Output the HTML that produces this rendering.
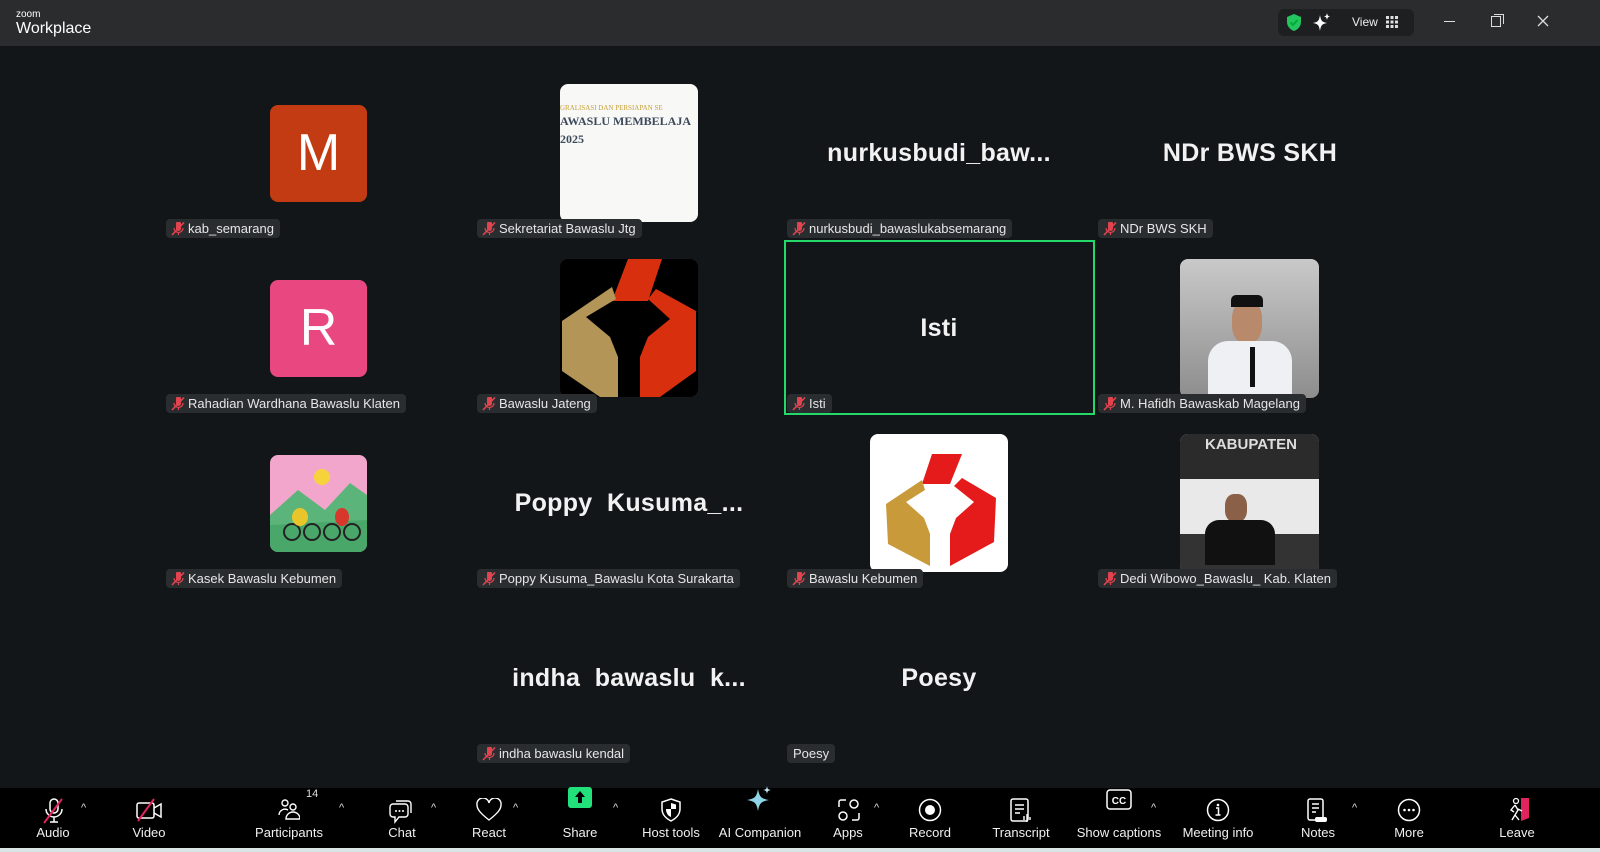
<!DOCTYPE html>
<html><head><meta charset="utf-8"><style>
*{margin:0;padding:0;box-sizing:border-box}
body{width:1600px;height:852px;background:#131619;font-family:"Liberation Sans",sans-serif;position:relative;overflow:hidden;color:#fff}
.top{position:absolute;left:0;top:0;width:1600px;height:46px;background:#2b2c2e}
.abs{position:absolute}
.lbl{position:absolute;height:19px;background:#2a2d30;border-radius:4px;font-size:13px;color:#e6e6e6;line-height:19px;padding:0 6px 0 22px;white-space:nowrap}
.lbl svg{position:absolute;left:5px;top:3px}
.big{position:absolute;font-weight:bold;font-size:25px;color:#f2f2f2;text-align:center;width:310px;white-space:nowrap;letter-spacing:0.3px}
.av{position:absolute;border-radius:8px;overflow:hidden}
.tb{position:absolute;left:0;top:788px;width:1600px;height:60px;background:#000}
.bl{position:absolute;left:0;top:848px;width:1600px;height:4px;background:#d9e4e4}
.btn{position:absolute;top:825px;font-size:13px;color:#f0f0f0;text-align:center;transform:translateX(-50%);white-space:nowrap}
.ic{position:absolute;top:798px}
.car{position:absolute;top:802px;font-size:11px;color:#ddd}
</style></head><body>
<div class="top">
<div class="abs" style="left:16px;top:9px;font-size:10px;color:#fff">zoom</div>
<div class="abs" style="left:16px;top:20px;font-size:16px;color:#fff">Workplace</div>
<div class="abs" style="left:1278px;top:9px;width:136px;height:27px;background:#1e1f21;border-radius:6px"></div>
<svg class="abs" style="left:1286px;top:13px" width="16" height="19" viewBox="0 0 16 19"><path d="M8 1 L15 4 V9 C15 14 11 17 8 18 C5 17 1 14 1 9 V4Z" fill="#22c55e"/><path d="M4.5 9.5 L7 12 L11.5 7" stroke="#0a3" stroke-width="1.8" fill="none"/></svg>
<svg class="abs" style="left:1312px;top:12px" width="20" height="20" viewBox="0 0 20 20"><path d="M8 3 C9 9 10 10 15 11 C10 12 9 13 8 19 C7 13 6 12 1 11 C6 10 7 9 8 3Z" fill="#fff"/><path d="M15 1 C15.5 3.5 16 4 18 4.5 C16 5 15.5 5.5 15 8 C14.5 5.5 14 5 12 4.5 C14 4 14.5 3.5 15 1Z" fill="#fff"/></svg>
<div class="abs" style="left:1352px;top:15px;font-size:12px;color:#eee">View</div>
<svg class="abs" style="left:1386px;top:16px" width="12" height="12"><g fill="#ddd"><rect x="0" y="0" width="3" height="3"/><rect x="4.5" y="0" width="3" height="3"/><rect x="9" y="0" width="3" height="3"/><rect x="0" y="4.5" width="3" height="3"/><rect x="4.5" y="4.5" width="3" height="3"/><rect x="9" y="4.5" width="3" height="3"/><rect x="0" y="9" width="3" height="3"/><rect x="4.5" y="9" width="3" height="3"/><rect x="9" y="9" width="3" height="3"/></g></svg>
<div class="abs" style="left:1444px;top:21px;width:11px;height:1px;background:#ddd"></div>
<div class="abs" style="left:1491px;top:16px;width:10px;height:11px;border:1px solid #ddd"></div>
<div class="abs" style="left:1494px;top:14px;width:10px;height:10px;border-top:1px solid #ddd;border-right:1px solid #ddd"></div>
<svg class="abs" style="left:1537px;top:15px" width="12" height="12"><path d="M1 1 L11 11 M11 1 L1 11" stroke="#ddd" stroke-width="1.3"/></svg>
</div>

<div class="av" style="left:270px;top:105px;width:97px;height:97px;background:#c33b12;font-size:52px;text-align:center;line-height:97px;color:#fff">M</div>
<div class="av" style="left:560px;top:84px;width:138px;height:138px;background:#f8f8f6">
<div class="abs" style="left:0;top:20px;font-size:7px;color:#c9a23a;white-space:nowrap;font-family:'Liberation Serif',serif">GRALISASI DAN PERSIAPAN SE</div>
<div class="abs" style="left:0;top:30px;font-size:12px;font-weight:bold;color:#3d4a5c;white-space:nowrap;font-family:'Liberation Serif',serif">AWASLU MEMBELAJA</div>
<div class="abs" style="left:0;top:48px;font-size:12px;font-weight:bold;color:#3d4a5c;font-family:'Liberation Serif',serif">2025</div>
</div>
<div class="big" style="left:784px;top:139px">nurkusbudi_baw...</div>
<div class="big" style="left:1095px;top:139px">NDr BWS SKH</div>

<div class="av" style="left:270px;top:280px;width:97px;height:97px;background:#e9477f;font-size:52px;text-align:center;line-height:97px;color:#fff">R</div>
<div class="av" style="left:560px;top:259px;width:138px;height:138px;background:#000">
<svg width="138" height="138" viewBox="0 0 138 138"><polygon points="68,0 102,0 88,42 52,42" fill="#d8300f"/><polygon points="2,62 52,28 56,40 26,58 50,78 58,98 58,138 40,138 2,112" fill="#b39557"/><polygon points="88,40 96,30 136,52 136,112 100,138 80,138 80,98 88,78 110,60" fill="#d8300f"/></svg>
</div>
<div class="abs" style="left:784px;top:240px;width:311px;height:175px;border:2px solid #23d96a"></div>
<div class="big" style="left:784px;top:314px">Isti</div>
<div class="av" style="left:1180px;top:259px;width:139px;height:139px;background:linear-gradient(#c9c9c9,#8d8d8d)">
<div class="abs" style="left:52px;top:42px;width:30px;height:42px;background:#b88a6b;border-radius:40%"></div>
<div class="abs" style="left:51px;top:36px;width:32px;height:12px;background:#111;border-radius:5px 5px 0 0"></div>
<div class="abs" style="left:28px;top:82px;width:84px;height:60px;background:#eef0f4;border-radius:20px 20px 0 0"></div>
<div class="abs" style="left:70px;top:88px;width:5px;height:40px;background:#111"></div>
</div>

<div class="av" style="left:270px;top:455px;width:97px;height:97px;background:#f3a6cc">
<svg width="97" height="97" viewBox="0 0 97 97"><circle cx="52" cy="22" r="8" fill="#f7d33b"/><polygon points="0,60 28,35 55,55 80,28 97,40 97,97 0,97" fill="#5bb57a"/><polygon points="0,70 97,65 97,97 0,97" fill="#4aa76a"/><circle cx="22" cy="77" r="8" fill="none" stroke="#222" stroke-width="2"/><circle cx="42" cy="77" r="8" fill="none" stroke="#222" stroke-width="2"/><circle cx="62" cy="77" r="8" fill="none" stroke="#222" stroke-width="2"/><circle cx="82" cy="77" r="8" fill="none" stroke="#222" stroke-width="2"/><ellipse cx="30" cy="62" rx="8" ry="9" fill="#e8c52a"/><ellipse cx="72" cy="62" rx="7" ry="9" fill="#d8372b"/></svg>
</div>
<div class="big" style="left:474px;top:489px">Poppy&nbsp; Kusuma_...</div>
<div class="av" style="left:870px;top:434px;width:138px;height:138px;background:#fff">
<svg width="138" height="138" viewBox="0 0 138 138"><polygon points="62,20 92,20 80,50 52,50" fill="#e51b1b"/><polygon points="16,70 52,46 55,56 36,68 54,84 60,100 60,132 18,110" fill="#c99a3a"/><polygon points="84,52 92,44 126,64 124,108 80,132 80,100 86,84 104,68" fill="#e51b1b"/></svg>
</div>
<div class="av" style="left:1180px;top:434px;width:139px;height:139px;background:#e9e9e9">
<div class="abs" style="left:0;top:0;width:139px;height:45px;background:#2b2b2b"></div>
<div class="abs" style="left:25px;top:2px;font-size:15px;font-weight:bold;color:#ddd;white-space:nowrap">KABUPATEN</div>
<div class="abs" style="left:0;top:100px;width:139px;height:39px;background:#333"></div>
<div class="abs" style="left:45px;top:60px;width:22px;height:28px;background:#8a6048;border-radius:40%"></div>
<div class="abs" style="left:25px;top:86px;width:70px;height:45px;background:#111;border-radius:14px 14px 0 0"></div>
</div>

<div class="big" style="left:474px;top:664px">indha&nbsp; bawaslu&nbsp; k...</div>
<div class="big" style="left:784px;top:664px">Poesy</div>

<svg width="0" height="0" style="position:absolute"><defs><g id="mu"><path d="M5 1.5 a2.5 2.5 0 0 1 5 0 v5 a2.5 2.5 0 0 1 -5 0z" fill="#e2444f"/><path d="M3 6 a4.5 4.5 0 0 0 9 0 M7.5 10.5 v2.5" stroke="#e2444f" stroke-width="1.2" fill="none"/><path d="M1 13 L13 0.5" stroke="#e2444f" stroke-width="1.6"/></g></defs></svg>
<div class="lbl" style="left:166px;top:219px"><svg width="14" height="14"><use href="#mu"/></svg>kab_semarang</div>
<div class="lbl" style="left:477px;top:219px"><svg width="14" height="14"><use href="#mu"/></svg>Sekretariat Bawaslu Jtg</div>
<div class="lbl" style="left:787px;top:219px"><svg width="14" height="14"><use href="#mu"/></svg>nurkusbudi_bawaslukabsemarang</div>
<div class="lbl" style="left:1098px;top:219px"><svg width="14" height="14"><use href="#mu"/></svg>NDr BWS SKH</div>
<div class="lbl" style="left:166px;top:394px"><svg width="14" height="14"><use href="#mu"/></svg>Rahadian Wardhana Bawaslu Klaten</div>
<div class="lbl" style="left:477px;top:394px"><svg width="14" height="14"><use href="#mu"/></svg>Bawaslu Jateng</div>
<div class="lbl" style="left:787px;top:394px"><svg width="14" height="14"><use href="#mu"/></svg>Isti</div>
<div class="lbl" style="left:1098px;top:394px"><svg width="14" height="14"><use href="#mu"/></svg>M. Hafidh Bawaskab Magelang</div>
<div class="lbl" style="left:166px;top:569px"><svg width="14" height="14"><use href="#mu"/></svg>Kasek Bawaslu Kebumen</div>
<div class="lbl" style="left:477px;top:569px"><svg width="14" height="14"><use href="#mu"/></svg>Poppy Kusuma_Bawaslu Kota Surakarta</div>
<div class="lbl" style="left:787px;top:569px"><svg width="14" height="14"><use href="#mu"/></svg>Bawaslu Kebumen</div>
<div class="lbl" style="left:1098px;top:569px"><svg width="14" height="14"><use href="#mu"/></svg>Dedi Wibowo_Bawaslu_ Kab. Klaten</div>
<div class="lbl" style="left:477px;top:744px"><svg width="14" height="14"><use href="#mu"/></svg>indha bawaslu kendal</div>
<div class="lbl" style="left:787px;top:744px;padding-left:6px">Poesy</div>

<div class="tb"></div>
<div class="bl"></div>
<svg class="ic" style="left:42px" width="24" height="26" viewBox="0 0 24 26"><rect x="8" y="1" width="8" height="14" rx="4" fill="none" stroke="#fff" stroke-width="1.5"/><path d="M4 11 a8 8 0 0 0 16 0 M12 19 v5 M8 24 h8" stroke="#fff" stroke-width="1.5" fill="none"/><path d="M2 25 L20 1" stroke="#e0245e" stroke-width="2"/></svg>
<div class="car" style="left:81px">^</div>
<div class="btn" style="left:53px">Audio</div>
<svg class="ic" style="left:135px" width="28" height="24" viewBox="0 0 28 24"><rect x="2" y="5" width="17" height="15" rx="2" fill="none" stroke="#fff" stroke-width="1.5"/><path d="M19 10 L26 6 V19 L19 15" fill="none" stroke="#fff" stroke-width="1.5"/><path d="M3 23 L19 1" stroke="#e0245e" stroke-width="2"/></svg>
<div class="btn" style="left:149px">Video</div>
<svg class="ic" style="left:278px" width="22" height="22" viewBox="0 0 22 22"><circle cx="7" cy="5" r="3" fill="none" stroke="#fff" stroke-width="1.4"/><circle cx="15" cy="9" r="3" fill="none" stroke="#fff" stroke-width="1.4"/><path d="M1 17 a6 6 0 0 1 9 -5 M8 21 a7 7 0 0 1 14 0z" fill="none" stroke="#fff" stroke-width="1.4"/></svg>
<div class="abs" style="left:306px;top:788px;font-size:11px;color:#ddd">14</div>
<div class="car" style="left:339px">^</div>
<div class="btn" style="left:289px">Participants</div>
<svg class="ic" style="left:389px" width="24" height="26" viewBox="0 0 24 26"><path d="M7 3 h12 a3 3 0 0 1 3 3 v9" fill="none" stroke="#fff" stroke-width="1.4"/><path d="M4 6 h12 a3 3 0 0 1 3 3 v7 a3 3 0 0 1 -3 3 h-6 l-4 5 v-5 h-2 a3 3 0 0 1 -3 -3 v-7 a3 3 0 0 1 3 -3z" fill="none" stroke="#fff" stroke-width="1.4"/><circle cx="7" cy="13" r="1" fill="#fff"/><circle cx="10.5" cy="13" r="1" fill="#fff"/><circle cx="14" cy="13" r="1" fill="#fff"/></svg>
<div class="car" style="left:431px">^</div>
<div class="btn" style="left:402px">Chat</div>
<svg class="ic" style="left:476px" width="26" height="24" viewBox="0 0 26 24"><path d="M13 22 C4 15 1 11 1 7 A5.5 5.5 0 0 1 13 5 A5.5 5.5 0 0 1 25 7 C25 11 22 15 13 22Z" fill="none" stroke="#fff" stroke-width="1.4"/></svg>
<div class="car" style="left:513px">^</div>
<div class="btn" style="left:489px">React</div>
<div class="abs" style="left:568px;top:787px;width:24px;height:21px;background:#22e07a;border-radius:3px"></div>
<svg class="abs" style="left:573px;top:789px" width="14" height="16"><path d="M7 2 L2 8 H5 V14 H9 V8 H12Z" fill="#000"/></svg>
<div class="car" style="left:613px">^</div>
<div class="btn" style="left:580px">Share</div>
<svg class="ic" style="left:661px" width="20" height="24" viewBox="0 0 20 24"><path d="M10 1 L19 4 V11 C19 17 14 21 10 23 C6 21 1 17 1 11 V4Z" fill="none" stroke="#fff" stroke-width="1.5"/><path d="M10 5 V19 C7 18 5 15 5 11 H10 V5 L15 6.5 V11 H10" fill="#fff"/></svg>
<div class="btn" style="left:671px">Host tools</div>
<svg class="ic" style="left:747px;top:786px" width="26" height="26" viewBox="0 0 26 26"><path d="M11 3 C12.5 11 14 12.5 22 14 C14 15.5 12.5 17 11 25 C9.5 17 8 15.5 0 14 C8 12.5 9.5 11 11 3Z" fill="#8fd4e8"/><path d="M20 0 C20.5 3 21 3.5 24 4 C21 4.5 20.5 5 20 8 C19.5 5 19 4.5 16 4 C19 3.5 19.5 3 20 0Z" fill="#bfe6f2"/></svg>
<div class="btn" style="left:760px">AI Companion</div>
<svg class="ic" style="left:837px" width="24" height="24" viewBox="0 0 24 24"><path d="M2 9 V4 a2 2 0 0 1 2 -2 h5 M22 15 v5 a2 2 0 0 1 -2 2 h-5" fill="none" stroke="#fff" stroke-width="1.5"/><circle cx="17" cy="6" r="4" fill="none" stroke="#fff" stroke-width="1.5"/><circle cx="6" cy="18" r="4" fill="none" stroke="#fff" stroke-width="1.5"/></svg>
<div class="car" style="left:874px">^</div>
<div class="btn" style="left:848px">Apps</div>
<svg class="ic" style="left:918px" width="24" height="24"><circle cx="12" cy="12" r="10.5" fill="none" stroke="#fff" stroke-width="1.5"/><circle cx="12" cy="12" r="5" fill="#fff"/></svg>
<div class="btn" style="left:930px">Record</div>
<svg class="ic" style="left:1010px" width="22" height="26" viewBox="0 0 22 26"><rect x="1" y="1" width="17" height="22" rx="2" fill="none" stroke="#fff" stroke-width="1.5"/><path d="M5 7 h9 M5 11 h9 M5 15 h5 M14 18 v4 M17 16 v8 M20 19 v3" stroke="#fff" stroke-width="1.4"/></svg>
<div class="btn" style="left:1021px">Transcript</div>
<svg class="ic" style="left:1106px;top:789px" width="26" height="22"><rect x="1" y="1" width="24" height="19" rx="3" fill="none" stroke="#fff" stroke-width="1.5"/><text x="13" y="15" font-family="Liberation Sans" font-size="10" font-weight="bold" fill="#fff" text-anchor="middle">CC</text></svg>
<div class="car" style="left:1151px">^</div>
<div class="btn" style="left:1119px">Show captions</div>
<svg class="ic" style="left:1206px" width="24" height="24"><circle cx="12" cy="12" r="10.5" fill="none" stroke="#fff" stroke-width="1.5"/><circle cx="12" cy="7" r="1.3" fill="#fff"/><path d="M10 10 h2.5 v7 M9.5 17 h5" stroke="#fff" stroke-width="1.5" fill="none"/></svg>
<div class="btn" style="left:1218px">Meeting info</div>
<svg class="ic" style="left:1306px" width="22" height="26" viewBox="0 0 22 26"><rect x="2" y="1" width="15" height="21" rx="2" fill="none" stroke="#fff" stroke-width="1.5"/><path d="M6 6 h7 M6 10 h7 M6 14 h4" stroke="#fff" stroke-width="1.4"/><rect x="9" y="19" width="12" height="5" rx="2" fill="#fff"/></svg>
<div class="car" style="left:1352px">^</div>
<div class="btn" style="left:1318px">Notes</div>
<svg class="ic" style="left:1397px" width="24" height="24"><circle cx="12" cy="12" r="10.5" fill="none" stroke="#fff" stroke-width="1.5"/><circle cx="7.5" cy="12" r="1.3" fill="#fff"/><circle cx="12" cy="12" r="1.3" fill="#fff"/><circle cx="16.5" cy="12" r="1.3" fill="#fff"/></svg>
<div class="btn" style="left:1409px">More</div>
<svg class="ic" style="left:1505px;top:796px" width="26" height="26" viewBox="0 0 26 26"><path d="M16 2 H24 V22 L16 25Z" fill="#e0245e"/><circle cx="11" cy="5" r="2.5" fill="none" stroke="#fff" stroke-width="1.3"/><path d="M10 9 L6 14 L9 16 M10 9 L13 14 L10 19 L7 24 M10 19 L14 24 M13 13 L17 15" stroke="#fff" stroke-width="1.4" fill="none"/></svg>
<div class="btn" style="left:1517px">Leave</div>
</body></html>
